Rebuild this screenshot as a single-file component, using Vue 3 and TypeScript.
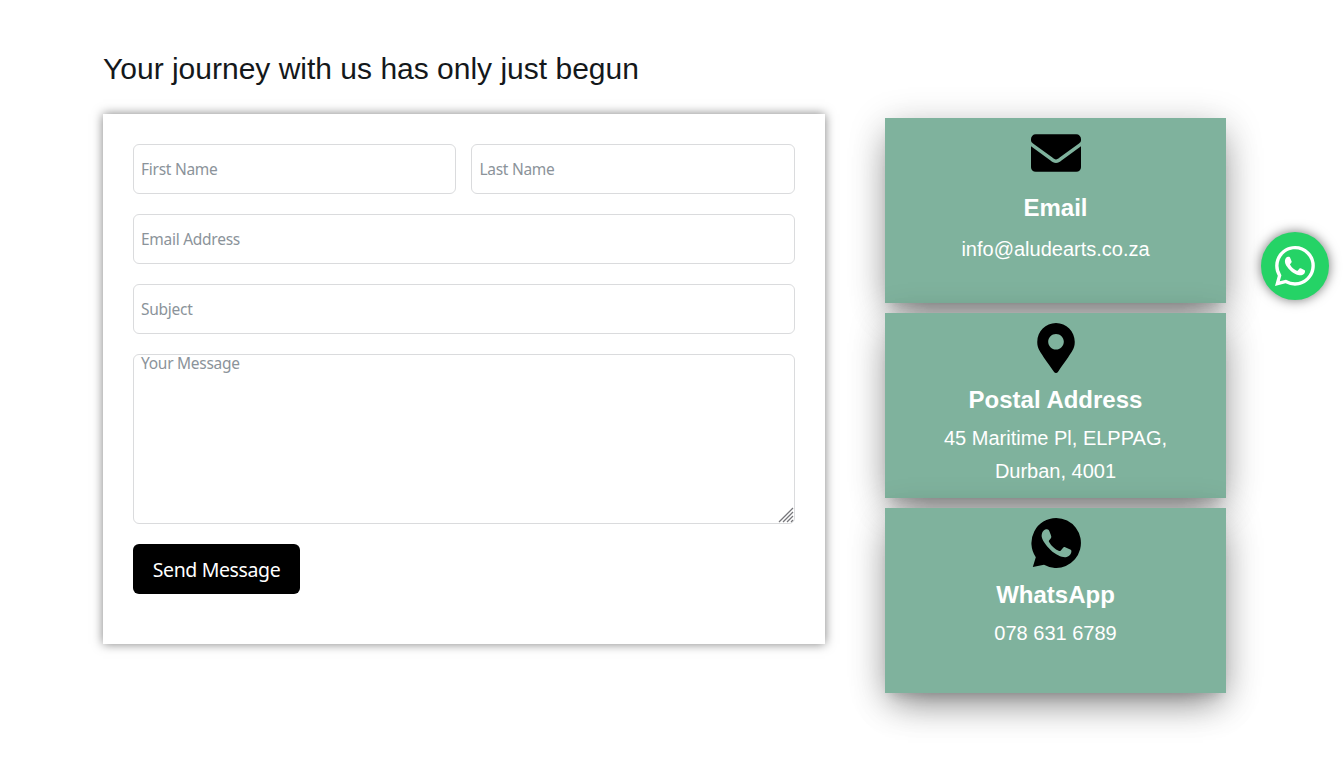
<script setup lang="ts">
interface Contact {
  icon: 'mail' | 'pin' | 'chat'
  title: string
  lines: string[]
}

const contacts: Contact[] = [
  { icon: 'mail', title: 'Email', lines: ['info@aludearts.co.za'] },
  { icon: 'pin', title: 'Postal Address', lines: ['45 Maritime Pl, ELPPAG,', 'Durban, 4001'] },
  { icon: 'chat', title: 'WhatsApp', lines: ['078 631 6789'] },
]
</script>

<template>
  <main class="page">
    <section class="main-col">
      <h2 class="heading">Your journey with us has only just begun</h2>
      <form class="form" @submit.prevent>
        <div class="names">
          <input type="text" placeholder="First Name" />
          <input type="text" placeholder="Last Name" />
        </div>
        <input type="email" placeholder="Email Address" />
        <input type="text" placeholder="Subject" />
        <div class="message">
          <textarea placeholder="Your Message"></textarea>
          <svg class="grip" width="16" height="16" viewBox="0 0 16 16">
            <path d="M1 15 15 1M5 15 15 5M9 15l6-6M13 15l2-2" fill="none" stroke="#77777b" stroke-width="1.3" />
          </svg>
        </div>
        <button type="submit">Send Message</button>
      </form>
    </section>

    <aside class="cards">
      <article v-for="c in contacts" :key="c.title" class="card" :class="c.icon">
        <svg v-if="c.icon === 'mail'" class="icon" viewBox="0 0 50 50">
          <path d="M4.7 6.3h40.6A4.7 4.7 0 0 1 50 11v1.2c0 1.6-.9 2.4-2 3.2L28.6 29.6c-1 .8-2.4 1.9-3.6 1.9s-2.6-1.1-3.6-1.9L2 15.4c-1.1-.8-2-1.6-2-3.2V11a4.7 4.7 0 0 1 4.7-4.7Z" />
          <path d="M0 18.2 19.5 32.4c1.6 1.2 3.4 2.6 5.5 2.6s3.9-1.4 5.5-2.6L50 18.2V39a4.7 4.7 0 0 1-4.7 4.8H4.7A4.7 4.7 0 0 1 0 39Z" />
        </svg>
        <svg v-else-if="c.icon === 'pin'" class="icon" viewBox="-64 0 512 512">
          <path d="M172.268 501.67C26.97 291.031 0 269.413 0 192 0 85.961 85.961 0 192 0s192 85.961 192 192c0 77.413-26.97 99.031-172.268 309.67-9.535 13.774-29.93 13.773-39.464 0zM192 272c44.183 0 80-35.817 80-80s-35.817-80-80-80-80 35.817-80 80 35.817 80 80 80z" />
        </svg>
        <svg v-else class="icon" viewBox="0 0 50 50">
          <path d="M25.2 0A24.8 25 0 1 1 13 46.8L1.8 49.1l3-9.9A24.8 25 0 0 1 25.2 0Z" />
          <path class="phone" d="M14.2 11.6c1.2-.5 2.8-.6 3.5.5.9 1.4 1.9 4.2 2.5 6.2.4 1.2-.2 2-2 3.9-.5.6-.5 1-.1 1.7 2.3 4.2 5.7 7.1 10 9 .7.3 1.2.2 1.7-.4l2.1-2.6c.7-.9 1.3-1.1 2.3-.7l5 2.4c.9.5 1.2.7 1.2 1.7-.2 3.2-2.6 5.5-5.8 5.9-3.4.4-9.9-2.3-15-7.2-4.4-4.2-8-9.3-8.7-12.4-.8-3.6.8-6.8 3.3-8Z" />
        </svg>
        <h4>{{ c.title }}</h4>
        <p><span v-for="line in c.lines" :key="line">{{ line }}</span></p>
      </article>
    </aside>

    <a class="float" aria-label="WhatsApp">
      <svg width="40" height="40" viewBox="0 0 16 16" fill="#fff">
        <path d="M13.601 2.326A7.854 7.854 0 0 0 7.994 0C3.627 0 .068 3.558.064 7.926c0 1.399.366 2.76 1.057 3.965L0 16l4.204-1.102a7.933 7.933 0 0 0 3.79.965h.004c4.368 0 7.926-3.558 7.93-7.93A7.898 7.898 0 0 0 13.6 2.326zM7.994 14.521a6.573 6.573 0 0 1-3.356-.92l-.24-.144-2.494.654.666-2.433-.156-.251a6.56 6.56 0 0 1-1.007-3.505c0-3.626 2.957-6.584 6.591-6.584a6.56 6.56 0 0 1 4.66 1.931 6.557 6.557 0 0 1 1.928 4.66c-.004 3.639-2.961 6.592-6.592 6.592zm3.615-4.934c-.197-.099-1.17-.578-1.353-.646-.182-.065-.315-.099-.445.099-.133.197-.513.646-.627.775-.114.133-.232.148-.43.05-.197-.1-.836-.308-1.592-.985-.59-.525-.985-1.175-1.103-1.372-.114-.198-.011-.304.088-.403.087-.088.197-.232.296-.346.1-.114.133-.198.198-.33.065-.134.034-.248-.015-.347-.05-.099-.445-1.076-.612-1.47-.16-.389-.323-.335-.445-.34-.114-.007-.247-.007-.38-.007a.729.729 0 0 0-.529.247c-.182.198-.691.677-.691 1.654 0 .977.71 1.916.81 2.049.098.133 1.394 2.132 3.383 2.992.47.205.84.326 1.129.418.475.152.904.129 1.246.08.38-.058 1.171-.48 1.338-.943.164-.464.164-.86.114-.943-.049-.084-.182-.133-.38-.232z" />
      </svg>
    </a>
  </main>
</template>

<style>
body {
  margin: 0;
  background: #fff;
  overflow: hidden;
}
</style>

<style scoped>
* {
  box-sizing: border-box;
}
.page {
  display: flex;
  align-items: flex-start;
  height: 782px;
  padding-left: 103px;
  font-family: "Liberation Sans", Arial, sans-serif;
}
.main-col {
  width: 722px;
}
.heading {
  margin: 50px 0 26px;
  font-size: 30px;
  line-height: 38px;
  font-weight: 400;
  color: #14181b;
  white-space: nowrap;
}
.form {
  display: flex;
  flex-direction: column;
  align-items: stretch;
  gap: 20px;
  height: 530px;
  padding: 30px;
  background: #fff;
  box-shadow: 0 0 10px rgba(0, 0, 0, 0.5);
}
.names {
  display: grid;
  grid-template-columns: 323.4px 1fr;
  gap: 15px;
}
input,
textarea {
  display: block;
  width: 100%;
  height: 50px;
  margin: 0;
  padding: 1px 7px;
  border: 1px solid #dadbdd;
  border-radius: 6px;
  background: #fff;
  outline: none;
  font: 15.5px/24px "Noto Sans", sans-serif;
  letter-spacing: -0.27px;
}
input::placeholder,
textarea::placeholder {
  color: #8b939a;
  opacity: 1;
}
.message {
  position: relative;
  height: 170px;
}
textarea {
  height: 170px;
  padding: 0 7px;
  line-height: 17px;
  resize: none;
}
.grip {
  position: absolute;
  right: 1px;
  bottom: 1px;
}
button {
  align-self: flex-start;
  width: 167px;
  height: 50px;
  padding: 2px 0 0;
  border: 0;
  border-radius: 6px;
  background: #000;
  color: #fff;
  font: 19.5px/30px "Noto Sans", sans-serif;
  letter-spacing: -0.38px;
  white-space: nowrap;
}
.cards {
  display: flex;
  flex-direction: column;
  gap: 10px;
  width: 341px;
  margin: 118px 0 0 60px;
}
.card {
  height: 185px;
  padding-top: 10px;
  background: #7fb29d;
  color: #fff;
  text-align: center;
  box-shadow:
    0 7px 36px rgba(0, 0, 0, 0.2),
    0 16px 36px -10px rgba(0, 0, 0, 0.42),
    0 8px 10px -5px rgba(0, 0, 0, 0.12);
}
.icon {
  display: block;
  width: 50px;
  height: 50px;
  margin: 0 auto;
}
.phone {
  fill: #7fb29d;
}
h4 {
  margin: 12px 0 7px;
  font-size: 24px;
  line-height: 30px;
  font-weight: 700;
}
p {
  margin: 0;
  font-size: 20px;
  line-height: 33px;
}
p span {
  display: block;
}
.mail h4 {
  margin: 15px 0 10px;
}
.float {
  position: absolute;
  left: 1261px;
  top: 232px;
  display: flex;
  align-items: center;
  justify-content: center;
  width: 68px;
  height: 68px;
  border-radius: 50%;
  background: #25d366;
  box-shadow: 0 0 12px rgba(0, 0, 0, 0.55);
}
</style>
